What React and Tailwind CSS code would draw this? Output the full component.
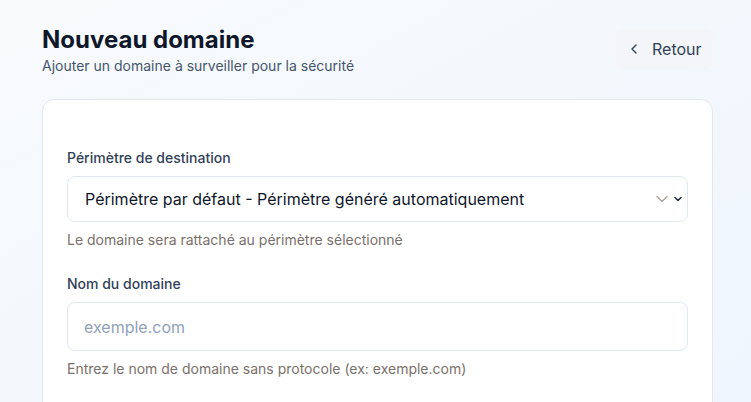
import React, { useState } from 'react';

const ChevronLeft = () => (
  <svg width="16" height="16" viewBox="0 0 24 24" fill="none" stroke="currentColor" strokeWidth="2" strokeLinecap="round" strokeLinejoin="round">
    <path d="m15 18-6-6 6-6" />
  </svg>
);

const ChevronDown = ({ className, size = 16, strokeWidth = 1.5 }) => (
  <svg className={className} width={size} height={size} viewBox="0 0 24 24" fill="none" stroke="currentColor" strokeWidth={strokeWidth} strokeLinecap="round" strokeLinejoin="round">
    <path d="m6 9 6 6 6-6" />
  </svg>
);

const NewDomain = () => {
  const [perimeter, setPerimeter] = useState('default');
  const [domain, setDomain] = useState('');

  return (
    <div className="min-h-screen bg-gradient-to-br from-slate-50 to-blue-50 font-['Inter',sans-serif]">
      <div className="px-[42px] pt-6 w-[751px]">
        {/* Header */}
        <div className="flex items-start justify-between mb-[23px] w-[671px]">
          <div>
            <h1 className="text-2xl font-bold text-slate-900 leading-8">Nouveau domaine</h1>
            <p className="text-sm text-slate-600 leading-5">Ajouter un domaine à surveiller pour la sécurité</p>
          </div>
          <button className="mt-[5px] h-10 w-[98px] flex items-center gap-[10px] pl-[11px] rounded-lg bg-[#f3f5f8] text-slate-700 text-base">
            <ChevronLeft />
            Retour
          </button>
        </div>

        {/* Card */}
        <div className="w-[671px] bg-white border border-slate-200 rounded-xl px-6 pt-12 pb-10">
          <label className="block text-sm font-medium text-slate-700 leading-5 mb-2">Périmètre de destination</label>
          <div className="relative">
            <select
              value={perimeter}
              onChange={(e) => setPerimeter(e.target.value)}
              className="appearance-none w-full h-[46px] pl-[17px] pr-12 rounded-lg border border-slate-200 bg-white text-base text-slate-900 outline-none"
            >
              <option value="default">Périmètre par défaut - Périmètre généré automatiquement</option>
            </select>
            <ChevronDown className="absolute right-[16px] top-[13px] text-[#a8a29e]" size={20} strokeWidth={1.5} />
            <ChevronDown className="absolute right-[4px] top-[17px] text-slate-800" size={12} strokeWidth={3} />
          </div>
          <p className="mt-2 text-sm text-stone-500 leading-5">Le domaine sera rattaché au périmètre sélectionné</p>

          <label className="block mt-6 text-sm font-medium text-slate-700 leading-5 mb-2">Nom du domaine</label>
          <input
            value={domain}
            onChange={(e) => setDomain(e.target.value)}
            placeholder="exemple.com"
            className="w-full h-[49px] px-4 rounded-lg border border-slate-200 text-base text-slate-900 placeholder:text-slate-400 outline-none"
          />
          <p className="mt-2 text-sm text-stone-500 leading-5">Entrez le nom de domaine sans protocole (ex: exemple.com)</p>
        </div>
      </div>
    </div>
  );
};

export default NewDomain;
